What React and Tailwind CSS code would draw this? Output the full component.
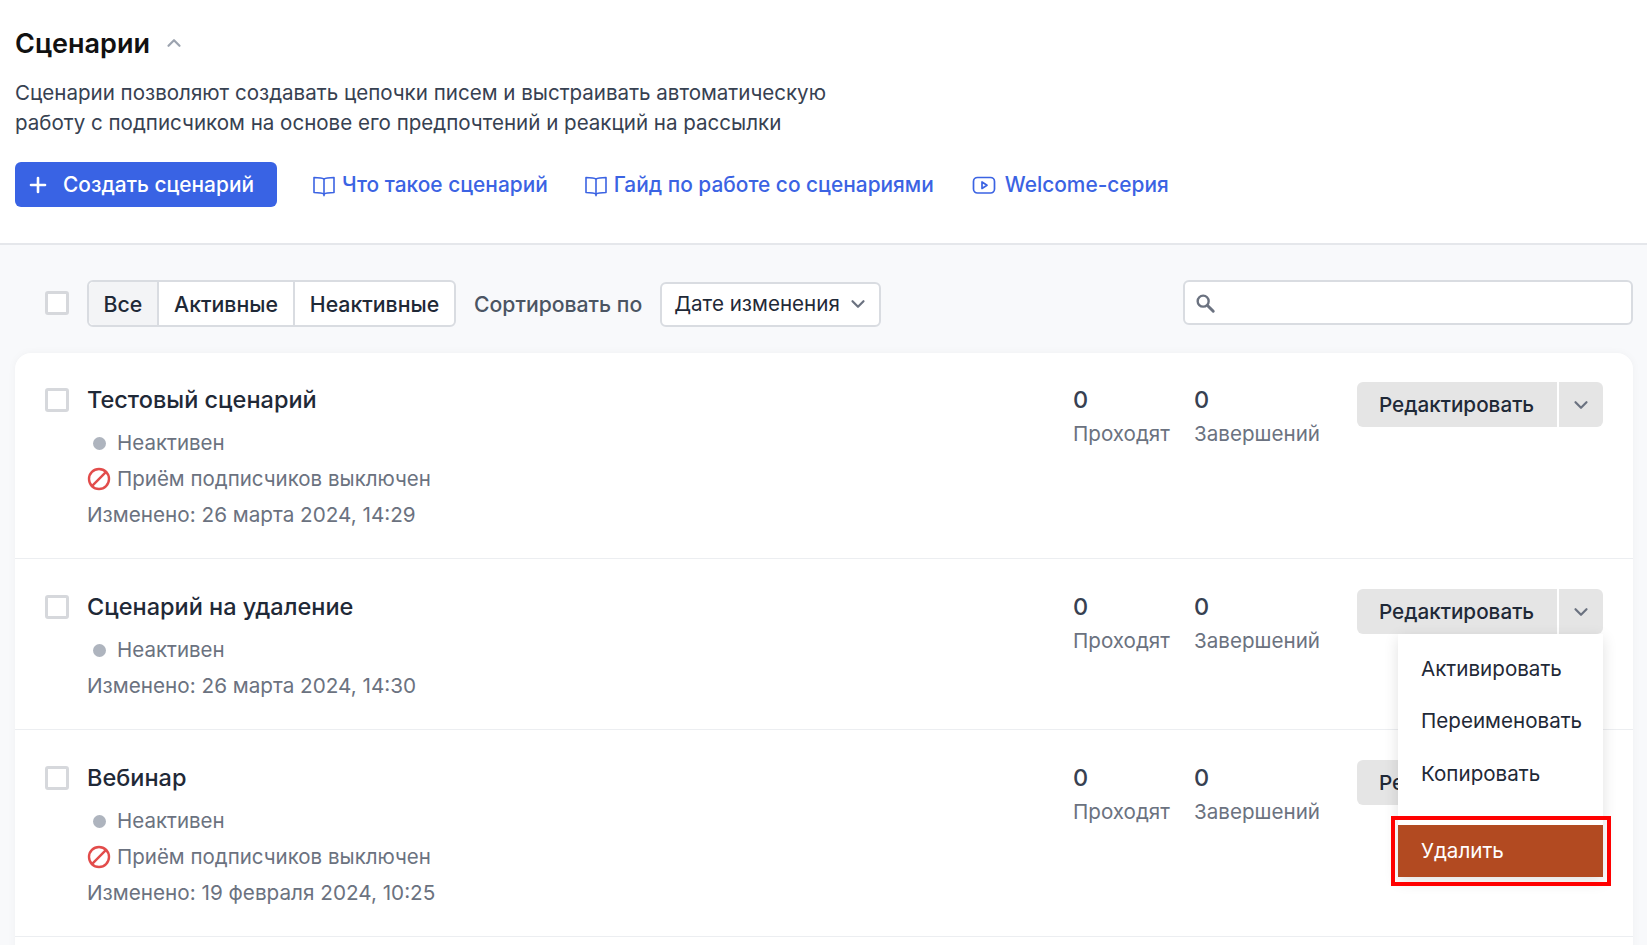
import React from "react";
import { Ban, ChevronDown, ChevronUp, Plus } from "lucide-react";

const BookIcon = () => (
  <svg width="24" height="24" viewBox="0 0 24 24" fill="none" stroke="currentColor" strokeWidth="1.6" strokeLinejoin="round" className="shrink-0">
    <path d="M12 6.2C10.5 5 8 4.5 2 4.5v15c6 0 8.5.5 10 1.7 1.5-1.2 4-1.7 10-1.7v-15c-6 0-8.5.5-10 1.7z" />
    <path d="M12 6.2v17" />
  </svg>
);

const VideoIcon = () => (
  <svg width="24" height="24" viewBox="0 0 24 24" fill="none" stroke="currentColor" strokeWidth="1.7" strokeLinejoin="round" className="shrink-0">
    <rect x="1.5" y="4.5" width="21" height="15.5" rx="4" />
    <path d="M10 9v6.5l5-3.2z" />
  </svg>
);

const SearchIcon = () => (
  <svg width="22" height="22" viewBox="0 0 24 24" fill="none" stroke="#6b7280" strokeWidth="2.6" strokeLinecap="round">
    <circle cx="10" cy="10" r="6" />
    <path d="M15 15l6 6" strokeWidth="3.2" />
  </svg>
);

const Checkbox = () => <div className="w-6 h-6 shrink-0 rounded-[3px] border-[3px] border-[#d6d8dc] bg-white" />;

const Stat = ({ label, className }) => (
  <div className={className}>
    <div className="text-[23.5px] leading-[30px] font-medium text-[#374151]">0</div>
    <div className="text-[20.6px] leading-[30px] mt-[4px] text-[#6b7280]">{label}</div>
  </div>
);

const ScenarioRow = ({ name, off, changed, rowClass, children }) => (
  <div className={`relative flex border-b border-[#eceef1] pl-[30px] pr-[30px] ${rowClass}`}>
    <div className="mt-[6px] mr-[18px]">
      <Checkbox />
    </div>
    <div className="flex-1">
      <div className="text-[23.5px] leading-[36px] font-medium text-[#1f2937]">{name}</div>
      <div className="mt-[7px] text-[20.5px] leading-[36px] text-[#6b7280]">
        <div className="flex items-center">
          <span className="w-[13px] h-[13px] rounded-full bg-[#aeb4be] ml-[6px] mr-[11px]" />
          Неактивен
        </div>
        {off && (
          <div className="flex items-center">
            <Ban size={24} color="#e24c4b" strokeWidth={2.4} className="mr-[6px] -scale-x-100" />
            Приём подписчиков выключен
          </div>
        )}
        <div className="text-[20.7px]">Изменено: {changed}</div>
      </div>
    </div>
    <div className="flex pt-[3px]">
      <Stat label="Проходят" className="w-[121px]" />
      <Stat label="Завершений" className="w-[163px]" />
    </div>
    <div className="flex h-[45px] text-[#1f2937]">
      <div className="w-[200px] pt-[1px] pr-[1px] flex items-center justify-center rounded-l-[6px] bg-[#e5e5e5] text-[20.7px] font-medium">Редактировать</div>
      <div className="w-[44px] ml-[2px] flex items-center justify-center rounded-r-[6px] bg-[#e5e5e5]">
        <ChevronDown size={22} color="#6b7280" strokeWidth={2.4} />
      </div>
    </div>
    {children}
  </div>
);

const ActionMenu = () => (
  <div className="absolute z-10 right-[30px] top-[75px] w-[205px] bg-white shadow-[0_4px_14px_rgba(0,0,0,0.12)] text-[20.6px] text-[#1f2937]">
    <div className="pl-[23px] h-[52px] flex items-center mt-[9px]">Активировать</div>
    <div className="pl-[23px] h-[53px] flex items-center">Переименовать</div>
    <div className="pl-[23px] h-[52px] flex items-center">Копировать</div>
    <div className="mt-[25px] pl-[23px] pt-[1px] h-[52px] flex items-center bg-[#b24a21] text-white">Удалить</div>
    <div className="absolute left-[-7px] right-[-8px] bottom-[-9px] h-[70px] border-[4px] border-[#ff0000]" />
  </div>
);

export default function App() {
  const font = { fontFamily: "Inter, 'Noto Sans', sans-serif" };

  return (
    <div className="h-[945px] overflow-hidden bg-[#f8f9fb]" style={font}>
      <div className="h-[245px] bg-white border-b-2 border-[#e5e7eb] pl-[15px] pt-[25px]">
        <div className="flex items-center h-[38px]">
          <h1 className="text-[27px] font-semibold text-[#111] leading-[38px]">Сценарии</h1>
          <ChevronUp size={22} color="#9ca3af" strokeWidth={2.4} className="ml-[13px] -mt-[2px]" />
        </div>
        <p className="mt-[15px] text-[20.55px] leading-[30px] text-[#374151]">
          Сценарии позволяют создавать цепочки писем и выстраивать автоматическую
          <br />
          работу с подписчиком на основе его предпочтений и реакций на рассылки
        </p>
        <div className="flex items-center mt-[24px] text-[20.88px] font-medium text-[#3b63e3]">
          <button className="flex items-center w-[262px] h-[45px] rounded-[6px] bg-[#3963e4] text-white pl-[11px]">
            <Plus size={24} strokeWidth={2.6} className="mr-[13px]" />
            Создать сценарий
          </button>
          <a className="flex items-center gap-[6px] ml-[35px]">
            <BookIcon />
            Что такое сценарий
          </a>
          <a className="flex items-center gap-[6px] ml-[36px]">
            <BookIcon />
            Гайд по работе со сценариями
          </a>
          <a className="flex items-center gap-[9px] ml-[38px]">
            <VideoIcon />
            Welcome-серия
          </a>
        </div>
      </div>

      <div className="pl-[15px] pr-[14px]">
        <div className="relative flex items-center h-[108px] pt-[36px] pb-[27px]">
          <div className="ml-[30px] mr-[18px] -mt-[2px]">
            <Checkbox />
          </div>
          <div className="flex h-[47px] rounded-[6px] border-2 border-[#d9dce1] bg-white text-[21.3px] font-medium text-[#1f2937]">
            <div className="w-[70px] pt-[2px] flex items-center justify-center bg-[#f3f4f6] border-r-2 border-[#d9dce1] rounded-l-[5px]">Все</div>
            <div className="w-[136px] pt-[2px] flex items-center justify-center border-r-2 border-[#d9dce1]">Активные</div>
            <div className="w-[159px] pt-[2px] flex items-center justify-center">Неактивные</div>
          </div>
          <div className="ml-[18px] pt-[2px] text-[21.2px] font-medium text-[#4b5563]">Сортировать по</div>
          <div className="ml-[18px] mt-[1px] w-[221px] h-[45px] flex items-center pl-[12px] rounded-[6px] border-2 border-[#d9dce1] bg-white text-[20.6px] text-[#1f2937]">
            <span className="pt-[1px]">Дате изменения</span>
            <ChevronDown size={22} color="#6b7280" strokeWidth={2.4} className="ml-[7px]" />
          </div>
          <div className="ml-auto -mt-[2px] w-[450px] h-[45px] flex items-center pl-[9px] rounded-[6px] border-2 border-[#d9dce1] bg-white">
            <SearchIcon />
          </div>
        </div>

        <div className="rounded-t-[16px] bg-white shadow-[0_0_8px_rgba(0,0,0,0.04)]">
          <ScenarioRow name="Тестовый сценарий" off changed="26 марта 2024, 14:29" rowClass="h-[206px] pt-[29px]" />
          <ScenarioRow name="Сценарий на удаление" changed="26 марта 2024, 14:30" rowClass="h-[171px] pt-[30px]">
            <ActionMenu />
          </ScenarioRow>
          <ScenarioRow name="Вебинар" off changed="19 февраля 2024, 10:25" rowClass="h-[207px] pt-[30px]" />
          <div className="h-[20px]" />
        </div>
      </div>
    </div>
  );
}
